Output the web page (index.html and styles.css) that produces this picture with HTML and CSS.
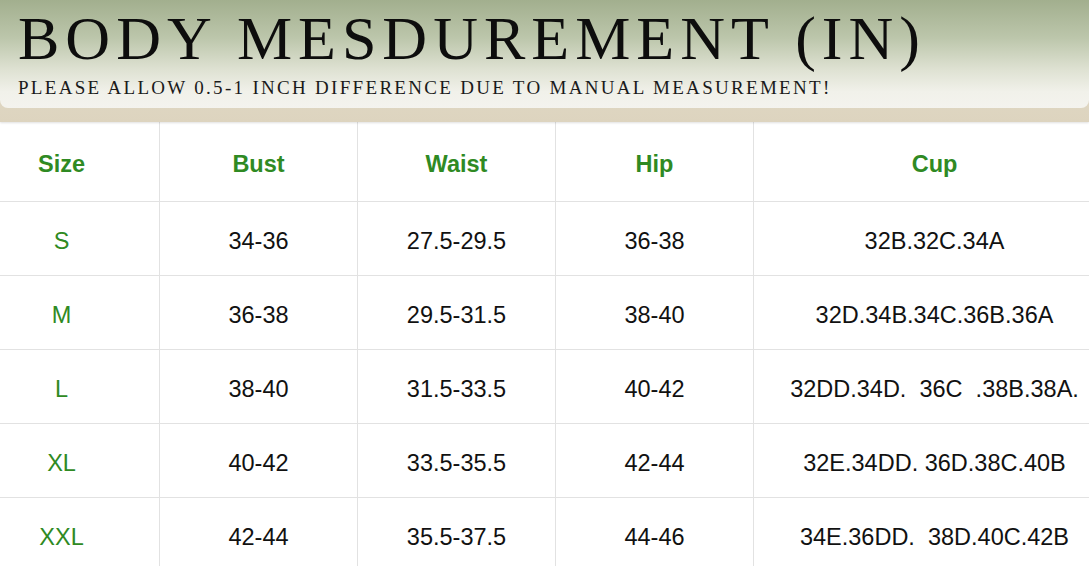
FILE: index.html
```html
<!DOCTYPE html>
<html>
<head>
<meta charset="utf-8">
<link rel="stylesheet" href="styles.css">
</head>
<body>
<div class="page">
  <div class="banner">
    <div class="card">
      <h1 class="title">BODY MESDUREMENT (IN)</h1>
      <p class="subtitle">PLEASE ALLOW 0.5-1 INCH DIFFERENCE DUE TO MANUAL MEASUREMENT!</p>
    </div>
  </div>
  <div class="table-clip">
    <table class="chart">
      <colgroup>
        <col class="c1"><col class="c2"><col class="c3"><col class="c4"><col class="c5">
      </colgroup>
      <thead>
        <tr><th>Size</th><th>Bust</th><th>Waist</th><th>Hip</th><th>Cup</th></tr>
      </thead>
      <tbody>
        <tr><td class="size">S</td><td>34-36</td><td>27.5-29.5</td><td>36-38</td><td class="cup">32B.32C.34A</td></tr>
        <tr><td class="size">M</td><td>36-38</td><td>29.5-31.5</td><td>38-40</td><td class="cup">32D.34B.34C.36B.36A</td></tr>
        <tr><td class="size">L</td><td>38-40</td><td>31.5-33.5</td><td>40-42</td><td class="cup">32DD.34D.  36C  .38B.38A.</td></tr>
        <tr><td class="size">XL</td><td>40-42</td><td>33.5-35.5</td><td>42-44</td><td class="cup">32E.34DD. 36D.38C.40B</td></tr>
        <tr><td class="size">XXL</td><td>42-44</td><td>35.5-37.5</td><td>44-46</td><td class="cup">34E.36DD.  38D.40C.42B</td></tr>
      </tbody>
    </table>
  </div>
</div>
</body>
</html>
```

FILE: styles.css
```css
html, body {
  margin: 0;
  padding: 0;
  background: #ffffff;
  overflow: hidden;
}
.page {
  width: 1089px;
  height: 566px;
  overflow: hidden;
}
.banner {
  background: linear-gradient(to bottom, #e5dfcd, #ddd4bf);
  padding-bottom: 14px;
  box-shadow: 0 1px 2px rgba(0,0,0,0.12);
  position: relative;
  z-index: 1;
}
.card {
  height: 108px;
  box-sizing: border-box;
  padding: 7px 0 0 18px;
  background: linear-gradient(to bottom, #a2af8e 0%, #bcc6ab 35%, #dfe2d3 65%, #f1f1ea 85%, #f4f3ee 100%);
  border-radius: 0 0 8px 8px;
}
.title {
  margin: 0;
  font-family: "Liberation Serif", "DejaVu Serif", serif;
  font-weight: normal;
  font-size: 62px;
  line-height: 62px;
  letter-spacing: 6px;
  color: #0d0d0d;
  white-space: nowrap;
}
.subtitle {
  margin: 8px 0 0 0;
  font-family: "Liberation Serif", "DejaVu Serif", serif;
  font-size: 19px;
  line-height: 22px;
  letter-spacing: 2.3px;
  color: #1a1a1a;
  white-space: nowrap;
}
.table-clip {
  margin-left: -37px;
}
.chart {
  border-collapse: collapse;
  table-layout: fixed;
  width: 1152px;
  font-family: "Liberation Sans", Arial, sans-serif;
  font-size: 23.5px;
  color: #111111;
}
.c1 { width: 196px; }
.c2 { width: 198px; }
.c3 { width: 198px; }
.c4 { width: 198px; }
.c5 { width: 362px; }
.chart th, .chart td {
  border: 1px solid #e2e2e2;
  text-align: center;
  padding: 5px 0 0 0;
  white-space: pre;
}
.chart thead tr > * { border-top: none; }
.chart th {
  height: 74px;
  font-weight: bold;
  color: #2f8a23;
}
.chart td {
  height: 68px;
}
.chart td.size {
  color: #2f8a23;
}
```
